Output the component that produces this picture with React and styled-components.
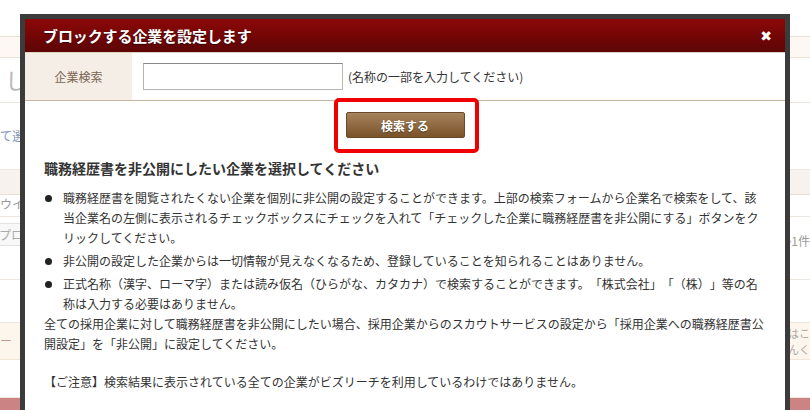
import React from "react";
import styled, { createGlobalStyle } from "styled-components";

const GlobalStyle = createGlobalStyle`
  html, body {
    margin: 0;
    padding: 0;
    background: #fff;
  }
  body {
    width: 810px;
    height: 410px;
    overflow: hidden;
    font-family: "Noto Sans CJK JP", "Noto Sans", sans-serif;
    color: #333;
    text-spacing-trim: space-all;
  }
`;

const Page = styled.div`
  position: relative;
  width: 810px;
  height: 410px;
  overflow: hidden;
`;

/* page behind the dialog */
const Backdrop = styled.div`
  display: flex;
  flex-direction: column;
`;

const BgRow = styled.div`
  height: ${(p) => p.h}px;
  background: ${(p) => p.bg || "#fff"};
  border-bottom: 1px solid ${(p) => p.line || "#efe7de"};
  display: flex;
  justify-content: space-between;
  align-items: ${(p) => p.align || "center"};
  box-sizing: border-box;
  font-size: 12px;
  color: #999;
`;

const BgText = styled.span`
  font-size: ${(p) => p.size || 12}px;
  color: ${(p) => p.color || "#999"};
  padding: ${(p) => p.pad || "0"};
  line-height: 1.15;
  white-space: nowrap;
`;

const BgLines = styled.div`
  display: flex;
  flex-direction: column;
  font-size: 11px;
  line-height: 16px;
  color: #aaa;
`;

const BgBox = styled.span`
  display: inline-block;
  border: 1px solid #e3e3e3;
  background: #f8f8f8;
  padding: 2px 4px 2px 2px;
  margin: 6px 0 0 -4px;
  font-size: 12px;
  color: #aaa;
`;

const PinkBar = styled.div`
  height: 14px;
  background: #cc8383;
`;

/* dialog */
const Modal = styled.div`
  position: absolute;
  left: 20px;
  top: 14px;
  width: 770px;
  height: 420px;
  box-sizing: border-box;
  border: 5px solid #3b3b3b;
  background: #fff;
  display: flex;
  flex-direction: column;
`;

const Header = styled.div`
  height: 34px;
  box-sizing: border-box;
  flex: none;
  background: linear-gradient(#8d0808, #5c0505);
  display: flex;
  align-items: center;
  justify-content: space-between;
  padding: 0 13px 0 18px;
  border-bottom: 1px solid #e2d2c2;
`;

const Title = styled.h1`
  margin: 0;
  font-size: 15px;
  font-weight: bold;
  color: #fff;
  text-shadow: 0 1px 1px rgba(0, 0, 0, 0.5);
  letter-spacing: -0.1px;
`;

const Close = styled.span`
  color: #fff;
  font-size: 14px;
  font-weight: bold;
  font-family: "DejaVu Sans", sans-serif;
  line-height: 1;
  cursor: pointer;
`;

const SearchRow = styled.div`
  display: flex;
  height: 48px;
  box-sizing: border-box;
  flex: none;
  border-bottom: 1px solid #c9b6a2;
`;

const LabelCell = styled.div`
  width: 107px;
  background: #f4eee7;
  border-right: 1px solid #fff;
  display: flex;
  align-items: center;
  justify-content: center;
  font-size: 12px;
  color: #7a6550;
`;

const InputCell = styled.div`
  display: flex;
  align-items: center;
  padding-left: 10px;
`;

const TextInput = styled.input`
  width: 200px;
  height: 27px;
  box-sizing: border-box;
  border: 1px solid #b4b4b4;
  border-top-color: #8a8a8a;
  margin: 0 5px 0 0;
  padding: 0 4px;
  font-size: 12px;
`;

const Hint = styled.span`
  font-size: 12px;
  color: #333;
`;

const ButtonBar = styled.div`
  display: flex;
  justify-content: center;
  padding-top: 11px;
`;

const ButtonWrap = styled.div`
  position: relative;
  display: flex;
`;

const Highlight = styled.span`
  position: absolute;
  left: -12px;
  right: -14px;
  top: -14px;
  bottom: -15px;
  border: 4px solid #f00000;
  border-radius: 5px;
  pointer-events: none;
`;

const SearchButton = styled.button`
  width: 119px;
  height: 26px;
  border: 1px solid #6a4a28;
  border-radius: 2px;
  background: linear-gradient(#a6835b, #7a5229);
  color: #fff;
  font-family: inherit;
  font-size: 12px;
  font-weight: bold;
  text-shadow: 0 1px 1px rgba(0, 0, 0, 0.4);
  padding: 0;
  cursor: pointer;
`;

const Body = styled.div`
  padding: 0 20px 0 19px;
`;

const Heading = styled.h2`
  margin: 20px 0 0;
  font-size: 14px;
  line-height: 20px;
  font-weight: bold;
  color: #333;
`;

const List = styled.ul`
  list-style: none;
  margin: 10px 0 0;
  padding: 0;
`;

const Item = styled.li`
  display: flex;
  font-size: 12px;
  line-height: 20px;
  margin-bottom: 3px;
  &:last-child {
    margin-bottom: 0;
  }
  &::before {
    content: "";
    flex: none;
    width: 7px;
    height: 7px;
    border-radius: 50%;
    background: #222;
    margin: 7px 11px 0 1px;
  }
`;

const Para = styled.p`
  margin: 0;
  font-size: 12px;
  line-height: 20px;
`;

const Note = styled.p`
  margin: 18px 0 0;
  font-size: 12px;
  line-height: 20px;
`;

export default function App() {
  return (
    <Page>
      <GlobalStyle />
      <Backdrop>
        <BgRow h={37} line="#ebe0d4" />
        <BgRow h={21} bg="#fdf8f3" line="#ece4db" />
        <BgRow h={45}>
          <BgText size={22} color="#b8b8b8" pad="0 0 0 5px">し</BgText>
        </BgRow>
        <BgRow h={67}>
          <BgText color="#7f98b8">て選</BgText>
        </BgRow>
        <BgRow h={25} bg="#f7f2ed" line="#e8dfd6" />
        <BgRow h={22} align="flex-start">
          <BgText pad="2px 0 0 0" color="#999">ウイ</BgText>
        </BgRow>
        <BgRow h={63} align="flex-start">
          <BgBox>プロッ</BgBox>
          <BgText pad="17px 0 0 0" color="#999">~1件</BgText>
        </BgRow>
        <BgRow h={43} />
        <BgRow h={37} bg="#fdf6ec" line="#f1e6d6">
          <BgText color="#c99">ー</BgText>
          <BgLines>
            <span>はこ</span>
            <span>んく</span>
          </BgLines>
        </BgRow>
        <BgRow h={38} />
        <PinkBar />
      </Backdrop>

      <Modal>
        <Header>
          <Title>ブロックする企業を設定します</Title>
          <Close>✖</Close>
        </Header>
        <SearchRow>
          <LabelCell>企業検索</LabelCell>
          <InputCell>
            <TextInput type="text" />
            <Hint>(名称の一部を入力してください)</Hint>
          </InputCell>
        </SearchRow>
        <ButtonBar>
          <ButtonWrap>
            <SearchButton>検索する</SearchButton>
            <Highlight />
          </ButtonWrap>
        </ButtonBar>
        <Body>
          <Heading>職務経歴書を非公開にしたい企業を選択してください</Heading>
          <List>
            <Item>
              <span>
                職務経歴書を閲覧されたくない企業を個別に非公開の設定することができます。上部の検索フォームから企業名で検索をして、該当企業名の左側に表示されるチェックボックスにチェックを入れて「チェックした企業に職務経歴書を非公開にする」ボタンをクリックしてください。
              </span>
            </Item>
            <Item>
              <span>
                非公開の設定した企業からは一切情報が見えなくなるため、登録していることを知られることはありません。
              </span>
            </Item>
            <Item>
              <span>
                正式名称（漢字、ローマ字）または読み仮名（ひらがな、カタカナ）で検索することができます。「株式会社」「（株）」等の名称は入力する必要はありません。
              </span>
            </Item>
          </List>
          <Para>
            全ての採用企業に対して職務経歴書を非公開にしたい場合、採用企業からのスカウトサービスの設定から「採用企業への職務経歴書公開設定」を「非公開」に設定してください。
          </Para>
          <Note>
            【ご注意】検索結果に表示されている全ての企業がビズリーチを利用しているわけではありません。
          </Note>
        </Body>
      </Modal>
    </Page>
  );
}
